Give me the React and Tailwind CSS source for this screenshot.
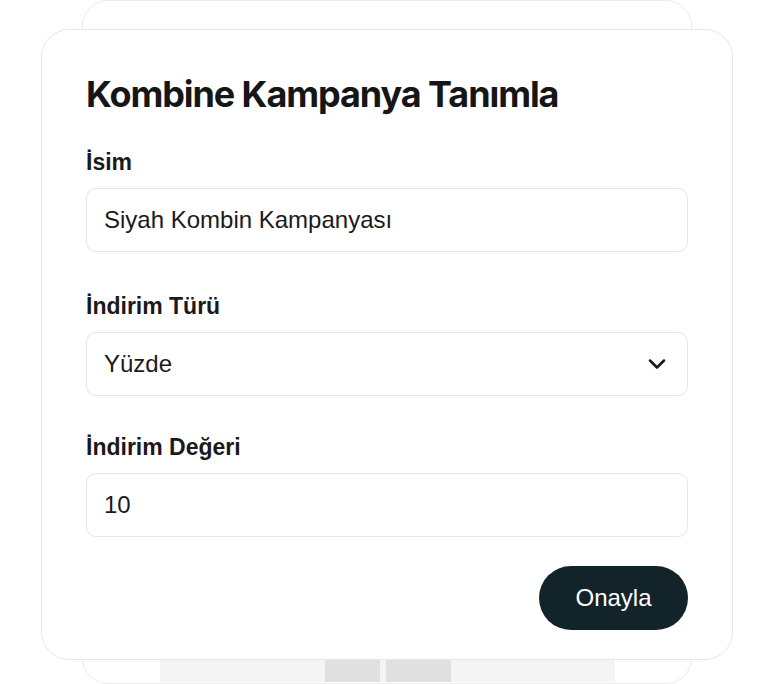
import { ChevronDown } from "lucide-react";

const titleFont = { fontFamily: "Inter, 'Noto Sans', sans-serif" };
const bodyFont = { fontFamily: "'Liberation Sans', Arial, sans-serif" };

function Field({ label, children, className = "" }) {
  return (
    <div className={className}>
      <label className="block text-[23px] leading-7 font-bold text-[#1a1a1a]" style={bodyFont}>
        {label}
      </label>
      <div className="mt-3">{children}</div>
    </div>
  );
}

export default function App() {
  return (
    <div className="relative w-[774px] h-[684px] bg-white overflow-hidden" style={bodyFont}>
      {/* page behind the dialog */}
      <div className="ml-[82px] w-[610px] h-[684px] rounded-[26px] border border-[#ececec] bg-white flex flex-col justify-end items-start pb-px">
        <div className="ml-[77px] w-[455px] h-[24px] bg-[#f4f4f4] flex">
          <div className="ml-[165px] w-[55px] h-full bg-[#e0e0e0]" />
          <div className="ml-[6px] w-[65px] h-full bg-[#e0e0e0]" />
        </div>
      </div>

      {/* dialog */}
      <div className="absolute left-[41px] top-[29px] w-[692px] h-[631px] rounded-[28px] border border-[#e6e6e6] bg-white px-[44px] pt-[44px]">
        <h1 className="text-[36px] leading-10 font-bold tracking-[-0.03em] text-[#161616]" style={titleFont}>
          Kombine Kampanya Tanımla
        </h1>

        <Field label="İsim" className="mt-[34px]">
          <input
            defaultValue="Siyah Kombin Kampanyası"
            className="w-full h-16 rounded-[10px] border border-[#e6e6e6] px-[17px] text-[24px] text-[#1a1a1a] outline-none"
            style={bodyFont}
          />
        </Field>

        <Field label="İndirim Türü" className="mt-10">
          <div className="w-full h-16 rounded-[10px] border border-[#e6e6e6] pl-[17px] pr-4 flex items-center justify-between">
            <span className="text-[24px] text-[#1a1a1a]">Yüzde</span>
            <ChevronDown className="w-7 h-7 text-[#1a1a1a]" strokeWidth={2.2} />
          </div>
        </Field>

        <Field label="İndirim Değeri" className="mt-[37px]">
          <input
            defaultValue="10"
            className="w-full h-16 rounded-[10px] border border-[#e6e6e6] px-[17px] text-[24px] text-[#1a1a1a] outline-none"
            style={bodyFont}
          />
        </Field>

        <div className="mt-[29px] flex justify-end">
          <button className="w-[149px] h-16 rounded-full bg-[#12242a] text-white text-[24px]" style={bodyFont}>
            Onayla
          </button>
        </div>
      </div>
    </div>
  );
}
